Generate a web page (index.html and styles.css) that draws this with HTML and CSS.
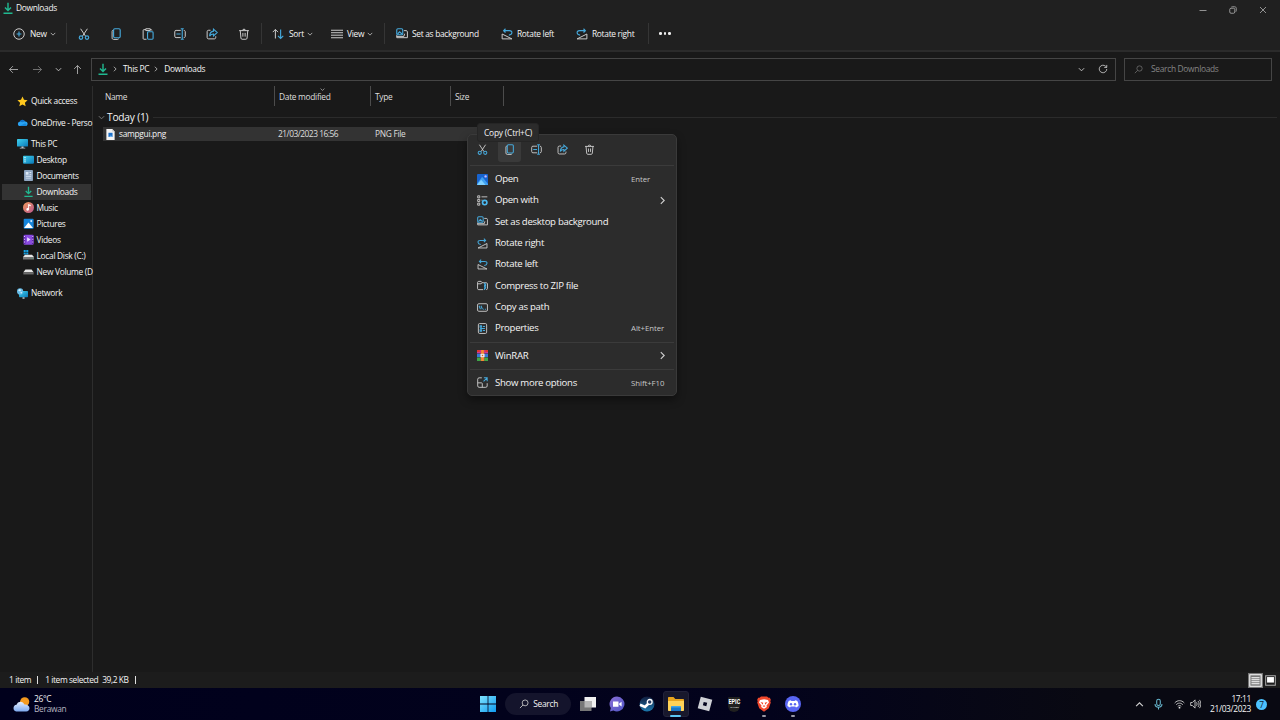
FILE: index.html
```html
<!DOCTYPE html>
<html lang="en">
<head>
    <meta charset="UTF-8">
    <meta name="viewport" content="width=device-width, initial-scale=1.0">
    <title>Downloads</title>
    <link rel="stylesheet" href="styles.css">
</head>
<body>
    <!-- Icon sprite -->
    <svg class="sprite" width="0" height="0">
        <defs>
            <linearGradient id="gScreen" x1="0" y1="0" x2="1" y2="1"><stop offset="0" stop-color="#3fd2ee"/><stop offset="1" stop-color="#0a78b8"/></linearGradient>
            <linearGradient id="gMusic" x1="0" y1="0" x2="1" y2="1"><stop offset="0" stop-color="#f09a5c"/><stop offset="1" stop-color="#b9568e"/></linearGradient>
            <linearGradient id="gWin" x1="0" y1="0" x2="1" y2="1"><stop offset="0" stop-color="#7fe3ff"/><stop offset="1" stop-color="#0f9af0"/></linearGradient>
            <linearGradient id="gCloud" x1="0" y1="0" x2="0" y2="1"><stop offset="0" stop-color="#e4efff"/><stop offset="1" stop-color="#7ea9ee"/></linearGradient>
            <linearGradient id="gSteam" x1="0" y1="0" x2="0" y2="1"><stop offset="0" stop-color="#111d3e"/><stop offset="1" stop-color="#1b78ad"/></linearGradient>
            <linearGradient id="gChat" x1="0" y1="0" x2="1" y2="1"><stop offset="0" stop-color="#8a6fd8"/><stop offset="1" stop-color="#4f55c4"/></linearGradient>
        </defs>
        <symbol id="download" viewBox="0 0 16 16"><path class="g" d="M8 1v10M4 7.2l4 4 4-4M2 15h12"/></symbol>
        <symbol id="new" viewBox="0 0 16 16"><circle class="w" cx="8" cy="8" r="7"/><path class="b" d="M8 4.8v6.4M4.8 8h6.4"/></symbol>
        <symbol id="chevron" viewBox="0 0 16 16"><path class="w c" d="M2 5l6 6 6-6"/></symbol>
        <symbol id="chevron-right" viewBox="0 0 16 16"><path class="w c" d="M5 2l6 6-6 6"/></symbol>
        <symbol id="cut" viewBox="0 0 16 16"><path class="w" d="M3.5 1l6.6 10M12.5 1L5.9 11"/><circle class="b" cx="4" cy="12.8" r="2.3"/><circle class="b" cx="12" cy="12.8" r="2.3"/></symbol>
        <symbol id="copy" viewBox="0 0 16 16"><path class="w" d="M4.5 3.2H3.8c-.7 0-1 .5-1 1.2v8.8c0 1.2.8 2 2 2h5.4c.7 0 1.2-.4 1.2-1"/><rect class="b" x="4.8" y="1" width="8.8" height="12" rx="1.6"/></symbol>
        <symbol id="paste" viewBox="0 0 16 16"><path class="w" d="M5 2.2H2.6c-.7 0-1.1.4-1.1 1.1v10.6c0 .7.4 1.1 1.1 1.1H6M11 2.2h1.2c.7 0 1.1.4 1.1 1.1M5 1h6v2.4H5z"/><rect class="b" x="7.4" y="5" width="7.4" height="10" rx="1.2"/></symbol>
        <symbol id="rename" viewBox="0 0 16 16"><path class="w" d="M9 3.2H2.8C1.600 3.200 1 3.900 1 5v6c0 1.100.6 1.800 1.800 1.800H9M13 3.200c1.300 0 2 .7 2 1.800v6c0 1.100-.7 1.800-2 1.800"/><path class="b" d="M9 1h4M9 15h4M11 1v14M3.200 8h5.600"/></symbol>
        <symbol id="share" viewBox="0 0 16 16"><path class="w" d="M6 3H3.500C2.200 3 1.500 3.700 1.500 5v7.500c0 1.300.7 2 2 2H11c1.300 0 2-.7 2-2V11"/><path class="b" d="M10 1.500L15 6l-5 4.500V8C7.500 8 6 8.800 4.800 10.800 5 7 7 4.500 10 4.200z"/></symbol>
        <symbol id="trash" viewBox="0 0 16 16"><path class="w" d="M1.500 3.500h13M6 3.300C6 1 10 1 10 3.300M3 3.500l.9 10c.1.900.7 1.500 1.600 1.500h5c.9 0 1.500-.6 1.600-1.500l.9-10M6.500 6.500v5M9.500 6.500v5"/></symbol>
        <symbol id="sort" viewBox="0 0 16 16"><path class="w" d="M4.500 14V2M1 5.500L4.500 2 8 5.500"/><path class="b" d="M11.500 2v12M8 10.500l3.500 3.500 3.500-3.500"/></symbol>
        <symbol id="view" viewBox="0 0 16 16"><path class="w" d="M0 3h16M0 6.300h16M0 9.600h16M0 13h16"/></symbol>
        <symbol id="background" viewBox="0 0 16 16"><path class="w" d="M10.500 3.500h3c1 0 1.700.6 1.700 1.600v7.800H1V9.500M1 11.200h9.500l1-3.500"/><rect class="b" x="1" y="1" width="8" height="8" rx="1.500"/><path class="b" d="M2 8l2.800-3L8 8"/></symbol>
        <symbol id="rotate-left" viewBox="0 0 16 16"><path class="w" d="M1.500 8v6.500h13L1.500 8z"/><path class="b" d="M6 1L3.500 3.500 6 6M3.700 3.500h7.500c2.300 0 3.500 1.200 3.300 2.800C14.300 8 13 9.300 10.500 9.500"/></symbol>
        <symbol id="rotate-right" viewBox="0 0 16 16"><path class="w" d="M14.500 8v6.500h-13L14.500 8z"/><path class="b" d="M10 1l2.500 2.500L10 6M12.300 3.500H4.800C2.500 3.500 1.300 4.700 1.500 6.300 1.700 8 3 9.300 5.500 9.500"/></symbol>
        <symbol id="arrow-left" viewBox="0 0 16 16"><path class="w" d="M16 8H1M7 2L1 8l6 6"/></symbol>
        <symbol id="arrow-right" viewBox="0 0 16 16"><path class="w" d="M0 8h15M9 2l6 6-6 6"/></symbol>
        <symbol id="arrow-up" viewBox="0 0 16 16"><path class="w" d="M8 16V1M2 7l6-6 6 6"/></symbol>
        <symbol id="refresh" viewBox="0 0 16 16"><path class="w" d="M14 8a6 6 0 1 1-2-4.500l2 1.800M14 1.500v4h-4"/></symbol>
        <symbol id="search" viewBox="0 0 16 16"><circle class="w" cx="9.800" cy="6.200" r="4.700"/><path class="w" d="M6.400 9.600L1.500 14.500"/></symbol>
        <symbol id="minimize" viewBox="0 0 16 16"><path class="w" d="M1 9h14"/></symbol>
        <symbol id="restore" viewBox="0 0 16 16"><rect class="w" x="1.500" y="4.500" width="10" height="10" rx="2.500"/><path class="w" d="M4.500 2.500C5 1.700 5.700 1.500 7 1.500h4c2.400 0 3.500 1.100 3.500 3.500v4c0 1.300-.4 2-1.200 2.500"/></symbol>
        <symbol id="close" viewBox="0 0 16 16"><path class="w" d="M2 2l12 12M14 2L2 14"/></symbol>
        <symbol id="star" viewBox="0 0 16 16"><path fill="#ffc81e" d="M8 .8l2.200 4.800 5.200.6-3.900 3.500 1.100 5.200L8 12.300l-4.600 2.600 1.100-5.200L.6 6.200l5.200-.6z"/></symbol>
        <symbol id="onedrive" viewBox="0 0 16 16"><path fill="#1173c9" d="M3.500 7.500A4.600 4.600 0 0 1 12 6.500l-3 5z"/><path fill="#2aa3f2" d="M3.300 13A3.100 3.100 0 0 1 4 7c1.500-.3 2.500.1 3.500.7L12 6.400a3.400 3.400 0 0 1 1.200 6.600z"/><path fill="#1689dd" d="M3.500 13L12 9l2.500 3.500c-.4.300-.8.500-1.300.5z"/></symbol>
        <symbol id="pc" viewBox="0 0 16 16"><rect x="0" y="1.500" width="16" height="11" rx="1" fill="url(#gScreen)"/><path fill="#b9c4cc" d="M6.500 12.500h3V14H12v1.200H4V14h2.500z"/></symbol>
        <symbol id="desktop" viewBox="0 0 16 16"><rect x="0" y="2.500" width="16" height="11.500" rx="1.200" fill="url(#gScreen)"/><path fill="#e3f7ff" d="M2 4.500h1.800v1.800H2zM2 7.500h1.800v1.800H2zM2 10.500h1.800V12H2z"/></symbol>
        <symbol id="documents" viewBox="0 0 16 16"><rect x="1.500" y="0" width="13" height="16" rx="1.200" fill="#8fa6c2"/><path fill="#dce8f5" d="M4 3h4v4H4zM9.500 3H12v1.300H9.500zM9.500 5.700H12V7H9.500zM4 8.500h8v1.300H4zM4 11.200h8v1.300H4z"/></symbol>
        <symbol id="music" viewBox="0 0 16 16"><circle cx="8" cy="8" r="8" fill="url(#gMusic)"/><path fill="#fff" d="M7.500 3l3.800 1.300v2L8.800 5.500v5.200a2 2 0 1 1-1.300-1.900z"/></symbol>
        <symbol id="pictures" viewBox="0 0 16 16"><rect x="1" y="1" width="14.500" height="14.500" rx="1.500" fill="#1585dc"/><path fill="#fff" d="M1.500 14.500L7 7.500c.6-.6 1.400-.6 2 0l5.500 7z"/><circle cx="12" cy="4.500" r="1.500" fill="#cfeaff"/></symbol>
        <symbol id="videos" viewBox="0 0 16 16"><rect x="1" y="1" width="14.500" height="14.500" rx="1.500" fill="#8a4be0"/><path fill="#5d25a8" d="M1 2h2.500v12.500H1zM13 2h2.500v12.500H13z"/><path fill="#e8d9ff" d="M1.500 3h1.400v1.500H1.500zM1.500 7h1.400v1.500H1.500zM1.500 11h1.400v1.500H1.500zM13.500 3h1.400v1.500h-1.400zM13.500 7h1.400v1.500h-1.400zM13.500 11h1.400v1.500h-1.400zM6 4.800l5 3.200-5 3.200z"/></symbol>
        <symbol id="disk-c" viewBox="0 0 16 16"><path fill="#17a3e6" d="M1 0h3v3H1zM4.700 0h3v3h-3zM1 3.700h3v2.800H1zM4.700 3.700h3v2.800h-3z"/><path fill="#e6e6e6" d="M3 7h10l3 3.200H0z"/><path fill="#777" d="M0 10.200h16v3.600H0z"/><path fill="#35c98a" d="M12.500 11.500H14v1h-1.500z"/></symbol>
        <symbol id="disk" viewBox="0 0 16 16"><path fill="#e6e6e6" d="M3.500 5h9L15.500 9H.5z"/><path fill="#6b6b6b" d="M.5 9h15v3.300H.5z"/></symbol>
        <symbol id="network" viewBox="0 0 16 16"><rect x="3" y="4.500" width="13" height="9" rx="1" fill="url(#gScreen)"/><path fill="#b9c4cc" d="M8 13.500h3v2.200H8z"/><circle cx="4.500" cy="5" r="4.500" fill="#66bce8"/><path fill="#d8f2ff" d="M1.500 3.500l2.500-2 2 1.500-1.500 2zM4.500 6.500l3-1-1 3z"/></symbol>
        <symbol id="png" viewBox="0 0 16 16"><path fill="#f4f4f4" d="M2 0h8.500L14 3.500V16H2z"/><path fill="#c4c4c4" d="M10.500 0L14 3.500h-3.500z"/><path fill="#1d70c9" d="M5 5.500h6V11.500H5z"/><path fill="#70b7f5" d="M6 11.500L8.500 9l2.500 2.500z"/></symbol>
        <symbol id="photos" viewBox="0 0 16 16"><rect x="0" y="0" width="16" height="16" rx="1.500" fill="#1763cf"/><path fill="#3fa0f2" d="M0 14L6.500 5.500c.7-.8 1.500-.8 2.200 0L16 14.500V16H0z"/><path fill="#7fd0ff" d="M0 16l6-7.500 6.500 7.500z"/><circle cx="12.500" cy="3.500" r="1.700" fill="#c9b9ff"/></symbol>
        <symbol id="open-with" viewBox="0 0 16 16"><path class="w" d="M1 1.200h3v3H1zM1 6.500h3v3H1zM1 11.800h3v3H1zM6.500 2.700H15M6.500 7.500H8"/><circle cx="11.200" cy="11" r="3.200" fill="none" stroke="#4cb9f0" stroke-width="2.400"/></symbol>
        <symbol id="zip" viewBox="0 0 16 16"><path class="w" d="M9 14H2.500C1.500 14 .8 13.400.8 12.500v-9C.8 2.600 1.500 2 2.500 2H6l1.500 2h6c1 0 1.700.6 1.700 1.500v7c0 .9-.7 1.500-1.700 1.500M1 5.500h5L7.500 4"/><path class="b" d="M11 4v2h1.500v2H11v2h1.500v2H11v2.500"/></symbol>
        <symbol id="path" viewBox="0 0 16 16"><rect class="w" x=".8" y="2.500" width="14.400" height="11" rx="1.800"/><path class="b" d="M3 5.500L5 10.500M5.800 5.500l2 5M9 10.500h1M11.500 10.500h1.500"/></symbol>
        <symbol id="properties" viewBox="0 0 16 16"><rect class="w" x="2" y=".8" width="12" height="14.400" rx="1.800"/><path class="b" d="M4.500 4h2v2h-2zM4.500 10h2v2h-2zM8.500 5h3.200M8.500 11h3.200M4.500 8h7"/></symbol>
        <symbol id="winrar" viewBox="0 0 16 16"><path fill="#c93a9c" d="M0 0h16v5H0z"/><path fill="#3579d8" d="M0 5.500h16v5H0z"/><path fill="#3fa648" d="M0 11h16v5H0z"/><path fill="#e0352c" d="M0 0h4v3H0zM12 0h4v3h-4zM5.500 0h5v16h-5z"/><path fill="#f58a35" d="M6 0h4v16H6z"/><path fill="#eee" d="M5 5.500h6v5H5z"/><path fill="#c46b23" d="M7 7h2v2H7z"/></symbol>
        <symbol id="more-options" viewBox="0 0 16 16"><path class="w" d="M7 1.200H3c-1.200 0-2 .8-2 2V13c0 1.200.8 2 2 2h9.800c1.200 0 2-.8 2-2V9M1 8.500h5.500c.8 0 1.200.4 1.200 1.200V15"/><path class="b" d="M10 1.200h4.800V6M14.500 1.500L9.500 6.500"/></symbol>
        <symbol id="weather" viewBox="0 0 16 16"><circle cx="11" cy="5.500" r="4.300" fill="#f39a1f"/><path fill="url(#gCloud)" d="M3 14.500a3.200 3.200 0 0 1 .3-6.300A4 4 0 0 1 10.800 8c3-.3 4.700 1.500 4.700 3.500 0 1.800-1.200 3-3 3z"/></symbol>
        <symbol id="windows" viewBox="0 0 16 16"><path fill="url(#gWin)" d="M0 0h7.600v7.600H0zM8.400 0H16v7.600H8.400zM0 8.400h7.600V16H0zM8.400 8.400H16V16H8.400z"/></symbol>
        <symbol id="taskview" viewBox="0 0 16 16"><path fill="#f0f0f0" d="M4.500 1H16v10.500H4.500z"/><path fill="#777" d="M0 5h11.500v10H0z"/><path fill="#b5b5b5" d="M4.500 5h7v6.500h-7z"/></symbol>
        <symbol id="chat" viewBox="0 0 16 16"><path fill="url(#gChat)" d="M8 .5a7.500 7.500 0 1 1-3.600 14.100L1 15.500l.8-3.400A7.500 7.500 0 0 1 8 .5z"/><path fill="#fff" d="M4 5.500h5.500v5.200H4zM10.200 7.500l2.400-1.700v4.600l-2.400-1.700z"/></symbol>
        <symbol id="steam" viewBox="0 0 16 16"><circle cx="8" cy="8" r="7.500" fill="url(#gSteam)"/><path stroke="#fff" stroke-width="2.600" fill="none" d="M1 8.800l5 2.200 4-4"/><circle cx="10.700" cy="5.900" r="2.400" fill="#223a63" stroke="#fff" stroke-width="1.300"/></symbol>
        <symbol id="explorer" viewBox="0 0 16 16"><path fill="#e8a51e" d="M0 2c0-.6.400-1 1-1h4.500l1.800 2H15c.6 0 1 .4 1 1v4H0z"/><path fill="#ffd257" d="M0 5h16v9c0 .6-.4 1-1 1H1c-.6 0-1-.4-1-1z"/><path fill="#1878c8" d="M3 15v-3.500C3 10.500 3.800 10 4.500 10h7c.7 0 1.500.5 1.500 1.500V15z"/><path fill="#3fa6e8" d="M4.500 10h7c.7 0 1.500.5 1.500 1.500H3c0-1 .8-1.500 1.500-1.500z"/></symbol>
        <symbol id="roblox" viewBox="0 0 16 16"><path fill="#cfd1d6" fill-rule="evenodd" d="M3.800.7l11.500 3.100-3.100 11.500L.7 12.200zM6.700 5.900L5.900 9.300l3.400.9.900-3.400z"/></symbol>
        <symbol id="brave" viewBox="0 0 16 16"><path fill="#f2482c" d="M5 .5h6l1.500 1.300h1.300l1 2-.5 1.700.5 1-2 5.800L8 15.800l-4.800-3.500-2-5.800.5-1-.5-1.700 1-2h1.300z"/><path fill="#fff" d="M4 4l4-.7 4 .7 1 2.500-2.500 3 .3 1.500L8 12.800 5.200 11l.3-1.500L3 6.500z"/><path fill="#f2482c" d="M4.500 6l2.800.7-.6 2zM11.500 6l-2.800.7.600 2zM6.500 10L8 9.300l1.500.7L8 11z"/></symbol>
        <symbol id="discord" viewBox="0 0 16 16"><circle cx="8" cy="8" r="8" fill="#5865f2"/><path fill="#fff" d="M5.500 4.300l1 .6h3l1-.6 1.800.8c.9 1.500 1.300 3.200 1.200 5-.7.700-1.500 1-2.500 1.300l-.7-1H5.700l-.7 1c-1-.3-1.800-.6-2.500-1.300-.1-1.800.3-3.500 1.200-5z"/><circle cx="6" cy="8.200" r="1.200" fill="#5865f2"/><circle cx="10" cy="8.200" r="1.200" fill="#5865f2"/></symbol>
        <symbol id="mic" viewBox="0 0 16 16"><path class="m" d="M8 1.200c1.700 0 2.600 1 2.600 2.500v4c0 1.600-.9 2.600-2.600 2.600s-2.600-1-2.600-2.600v-4C5.400 2.200 6.300 1.200 8 1.200zM3 8c0 3 2 4.700 5 4.700S13 11 13 8M8 12.700V16"/></symbol>
        <symbol id="wifi" viewBox="0 0 16 16"><path class="w" d="M1 6.500c4-4.500 10-4.500 14 0M3.200 9c3-3 6.600-3 9.600 0M5.500 11.400c1.500-1.500 3.500-1.500 5 0"/><circle cx="8" cy="13.300" r="1.300" fill="#eee"/></symbol>
        <symbol id="volume" viewBox="0 0 16 16"><path class="w" d="M1 5.800v4.400h2.500L7.300 14V2L3.500 5.800zM9.500 5.500c1 1.500 1 3.500 0 5M11.700 3.700c2 2.500 2 6 0 8.600M13.800 2c2.800 3.500 2.800 8.500 0 12"/></symbol>
        <symbol id="list-view" viewBox="0 0 16 16"><path fill="none" stroke="#fff" stroke-width="1.300" d="M1 1h14v14H1zM3 4.500h10M3 7h10M3 9.500h10M3 12h10"/></symbol>
        <symbol id="thumb-view" viewBox="0 0 16 16"><path fill="none" stroke="#aaa" stroke-width="1.500" d="M1 1h14v14H1z"/><path fill="#fff" d="M3 3h10v8H3z"/></symbol>
    </svg>

    <div class="window">
        <header class="chrome">
            <div class="titlebar">
                <svg class="icon"><use href="#download"/></svg>
                <span class="title">Downloads</span>
                <div class="window-controls">
                    <svg><use href="#minimize"/></svg>
                    <svg><use href="#restore"/></svg>
                    <svg><use href="#close"/></svg>
                </div>
            </div>
            <div class="commands">
                <div class="cmd cmd-new"><svg class="icon"><use href="#new"/></svg><span>New</span><svg class="caret"><use href="#chevron"/></svg></div>
                <div class="sep"></div>
                <div class="cmd-icons">
                    <svg><use href="#cut"/></svg>
                    <svg><use href="#copy"/></svg>
                    <svg><use href="#paste"/></svg>
                    <svg><use href="#rename"/></svg>
                    <svg><use href="#share"/></svg>
                    <svg><use href="#trash"/></svg>
                </div>
                <div class="sep"></div>
                <div class="cmd cmd-sort"><svg class="icon"><use href="#sort"/></svg><span>Sort</span><svg class="caret"><use href="#chevron"/></svg></div>
                <div class="cmd cmd-view"><svg class="icon"><use href="#view"/></svg><span>View</span><svg class="caret"><use href="#chevron"/></svg></div>
                <div class="sep"></div>
                <div class="cmd cmd-background"><svg class="icon"><use href="#background"/></svg><span>Set as background</span></div>
                <div class="cmd cmd-left"><svg class="icon"><use href="#rotate-left"/></svg><span>Rotate left</span></div>
                <div class="cmd cmd-right"><svg class="icon"><use href="#rotate-right"/></svg><span>Rotate right</span></div>
                <div class="sep"></div>
                <div class="dots"><i></i><i></i><i></i></div>
            </div>
        </header>

        <div class="nav">
            <div class="nav-buttons">
                <svg><use href="#arrow-left"/></svg>
                <svg class="dim"><use href="#arrow-right"/></svg>
                <svg class="small"><use href="#chevron"/></svg>
                <svg><use href="#arrow-up"/></svg>
            </div>
            <div class="address">
                <svg class="folder"><use href="#download"/></svg>
                <svg class="crumb"><use href="#chevron-right"/></svg>
                <span class="pc">This PC</span>
                <svg class="crumb"><use href="#chevron-right"/></svg>
                <span>Downloads</span>
                <svg class="history"><use href="#chevron"/></svg>
                <svg class="reload"><use href="#refresh"/></svg>
            </div>
            <div class="search"><svg><use href="#search"/></svg><span>Search Downloads</span></div>
        </div>

        <div class="content">
            <nav class="sidebar">
                <div class="node quick"><svg><use href="#star"/></svg><span>Quick access</span></div>
                <div class="node onedrive"><svg><use href="#onedrive"/></svg><span>OneDrive - Perso</span></div>
                <div class="node this-pc"><svg><use href="#pc"/></svg><span>This PC</span></div>
                <div class="node child"><svg><use href="#desktop"/></svg><span>Desktop</span></div>
                <div class="node child"><svg><use href="#documents"/></svg><span>Documents</span></div>
                <div class="node child active"><svg><use href="#download"/></svg><span>Downloads</span></div>
                <div class="node child"><svg><use href="#music"/></svg><span>Music</span></div>
                <div class="node child"><svg><use href="#pictures"/></svg><span>Pictures</span></div>
                <div class="node child"><svg><use href="#videos"/></svg><span>Videos</span></div>
                <div class="node child"><svg><use href="#disk-c"/></svg><span>Local Disk (C:)</span></div>
                <div class="node child"><svg><use href="#disk"/></svg><span>New Volume (D</span></div>
                <div class="node network"><svg><use href="#network"/></svg><span>Network</span></div>
            </nav>
            <main class="files">
                <div class="columns">
                    <div class="col col-name">Name</div>
                    <div class="col col-date">Date modified<svg><use href="#chevron"/></svg></div>
                    <div class="col col-type">Type</div>
                    <div class="col col-size">Size</div>
                </div>
                <div class="group"><svg><use href="#chevron"/></svg><span>Today (1)</span><hr></div>
                <div class="file">
                    <div class="file-name"><svg><use href="#png"/></svg><span>sampgui.png</span></div>
                    <div class="file-date">21/03/2023 16:56</div>
                    <div class="file-type">PNG File</div>
                </div>
            </main>
        </div>

        <footer class="status">
            <span class="count">1 item</span><i></i><span class="selected">1 item selected</span><span class="size">39,2 KB</span><i></i>
            <div class="views"><svg class="on"><use href="#list-view"/></svg><svg><use href="#thumb-view"/></svg></div>
        </footer>
    </div>

    <div class="menu">
        <div class="menu-icons">
            <div><svg><use href="#cut"/></svg></div>
            <div class="hover"><svg><use href="#copy"/></svg></div>
            <div><svg><use href="#rename"/></svg></div>
            <div><svg><use href="#share"/></svg></div>
            <div><svg><use href="#trash"/></svg></div>
        </div>
        <div class="menu-group">
            <div class="menu-item"><svg><use href="#photos"/></svg><span>Open</span><kbd>Enter</kbd></div>
            <div class="menu-item"><svg><use href="#open-with"/></svg><span>Open with</span><svg class="sub"><use href="#chevron-right"/></svg></div>
            <div class="menu-item"><svg><use href="#background"/></svg><span>Set as desktop background</span></div>
            <div class="menu-item"><svg><use href="#rotate-right"/></svg><span>Rotate right</span></div>
            <div class="menu-item"><svg><use href="#rotate-left"/></svg><span>Rotate left</span></div>
            <div class="menu-item"><svg><use href="#zip"/></svg><span>Compress to ZIP file</span></div>
            <div class="menu-item"><svg><use href="#path"/></svg><span>Copy as path</span></div>
            <div class="menu-item"><svg><use href="#properties"/></svg><span>Properties</span><kbd>Alt+Enter</kbd></div>
        </div>
        <div class="menu-group">
            <div class="menu-item"><svg><use href="#winrar"/></svg><span>WinRAR</span><svg class="sub"><use href="#chevron-right"/></svg></div>
        </div>
        <div class="menu-group">
            <div class="menu-item"><svg><use href="#more-options"/></svg><span>Show more options</span><kbd>Shift+F10</kbd></div>
        </div>
    </div>
    <div class="tooltip">Copy (Ctrl+C)</div>

    <div class="taskbar">
        <div class="weather"><svg><use href="#weather"/></svg><div><p>26°C</p><p class="muted">Berawan</p></div></div>
        <div class="apps">
            <div class="app"><svg><use href="#windows"/></svg></div>
            <div class="task-search"><svg><use href="#search"/></svg><span>Search</span></div>
            <div class="app"><svg><use href="#taskview"/></svg></div>
            <div class="app"><svg><use href="#chat"/></svg></div>
            <div class="app"><svg><use href="#steam"/></svg></div>
            <div class="app current"><svg><use href="#explorer"/></svg></div>
            <div class="app"><svg><use href="#roblox"/></svg></div>
            <div class="app"><div class="epic"><b>EPIC</b><small>GAMES</small></div></div>
            <div class="app running"><svg><use href="#brave"/></svg></div>
            <div class="app running"><svg><use href="#discord"/></svg></div>
        </div>
        <div class="tray">
            <svg class="up"><use href="#chevron"/></svg>
            <svg class="mic"><use href="#mic"/></svg>
            <svg class="wifi"><use href="#wifi"/></svg>
            <svg class="volume"><use href="#volume"/></svg>
            <div class="clock"><p>17:11</p><p>21/03/2023</p></div>
            <div class="badge">7</div>
        </div>
    </div>
</body>
</html>
```
FILE: styles.css
```css
* {
    box-sizing: border-box;
    margin: 0;
    padding: 0;
}

body {
    width: 1280px;
    height: 720px;
    overflow: hidden;
    background-color: #191919;
    color: #f5f5f5;
    font-family: 'Open Sans', 'Noto Sans', sans-serif;
    font-size: 8.4px;
    letter-spacing: -0.3px;
    line-height: 12px;
    white-space: nowrap;
}

svg {
    display: block;
    flex: none;
    width: 12px;
    height: 12px;
    overflow: visible;
}

.sprite {
    position: absolute;
    width: 0;
    height: 0;
}

/* icon strokes */
.w, .b, .g, .m {
    fill: none;
    stroke: #d0d0d0;
    stroke-width: 1.3;
}

.c {
    stroke-width: 2;
}

.b {
    stroke: #45a9dc;
    stroke-width: 1.5;
}

.g {
    stroke: #20b890;
    stroke-width: 1.9;
}

.m {
    stroke: #68b9d0;
    stroke-width: 1.5;
}

.window {
    display: flex;
    flex-direction: column;
    height: 688px;
}

/* title and command bar */
.chrome {
    height: 52px;
    background-color: #202020;
    border-bottom: 2px solid #2b2b2b;
}

.titlebar {
    display: flex;
    align-items: center;
    height: 16px;
    padding-left: 2px;
}

.titlebar .title {
    margin-left: 2px;
}

.window-controls {
    display: flex;
    gap: 22px;
    margin: 3px 13px 0 auto;
}

.window-controls svg {
    width: 8px;
    height: 8px;
}

.window-controls .w {
    stroke: #f0f0f0;
    stroke-width: 1.8;
}

.commands {
    display: flex;
    align-items: center;
    height: 35px;
    font-weight: 500;
}

.sep {
    width: 1px;
    height: 21px;
    background-color: #353535;
}

.cmd {
    display: flex;
    align-items: center;
}

.cmd span {
    margin-left: 5px;
}

.caret {
    width: 6px;
    height: 6px;
    margin-left: auto;
}

.cmd-new {
    width: 66px;
    padding: 0 10px 0 13px;
}

.cmd-sort {
    width: 60px;
    padding: 0 9px 0 10px;
}

.cmd-view {
    width: 62px;
    padding: 0 11px 0 9px;
}

.cmd-view span {
    margin-left: 4px;
}

.cmd-background {
    width: 107px;
    padding-left: 11px;
}

.cmd-background span {
    margin-left: 4px;
}

.cmd-left {
    width: 75px;
    padding-left: 9px;
}

.cmd-left span,
.cmd-right span {
    margin-left: 4px;
}

.cmd-right {
    width: 81px;
    padding-left: 9px;
}

.cmd-icons {
    display: flex;
    gap: 20px;
    width: 194px;
    padding-left: 11px;
}

.dots {
    display: flex;
    gap: 2px;
    margin-left: 10px;
}

.dots i {
    width: 2.5px;
    height: 2.5px;
    border-radius: 50%;
    background-color: #eee;
}

/* address row */
.nav {
    display: flex;
    align-items: center;
    height: 34px;
}

.nav-buttons {
    display: flex;
    align-items: center;
    gap: 13px;
    width: 91px;
    padding-left: 9px;
}

.nav-buttons svg {
    width: 9px;
    height: 9px;
}

.nav-buttons .small {
    width: 7px;
    height: 7px;
}

.nav-buttons svg:nth-child(2) {
    margin-left: 2px;
}

.nav-buttons svg:nth-child(4) {
    margin-left: -2px;
}

.nav-buttons .w,
.address .w {
    stroke: #f5f5f5;
    stroke-width: 2.2;
}

.dim {
    opacity: 0.65;
}

.address {
    display: flex;
    align-items: center;
    width: 1025px;
    height: 23px;
    padding: 0 7px 0 5px;
    border: 1px solid #454545;
}

.address .crumb {
    width: 6px;
    height: 6px;
    margin: 0 5px 0 3px;
}

.address .crumb .w {
    stroke-width: 3;
}

.address .pc {
    margin-right: 1px;
}

.address .history {
    width: 7px;
    height: 7px;
    margin-left: auto;
}

.address .reload {
    width: 10px;
    height: 10px;
    margin-left: 13px;
}

.search {
    display: flex;
    align-items: center;
    width: 148px;
    height: 23px;
    margin-left: 8px;
    padding-left: 9px;
    border: 1px solid #454545;
    color: #858585;
}

.search svg {
    width: 9px;
    height: 9px;
    margin-right: 8px;
    opacity: 0.5;
}

/* panes */
.content {
    display: flex;
    height: 586px;
}

.sidebar {
    width: 93px;
    padding: 7.4px 1px 0 2px;
    border-right: 1px solid #2d2d2d;
}

.node {
    display: flex;
    align-items: center;
    height: 16px;
    padding-left: 15px;
}

.node svg {
    width: 11px;
    height: 11px;
    margin-right: 3px;
}

.node.child {
    padding-left: 20.5px;
}

.node.onedrive {
    margin: 5.3px 0;
}

.node.network {
    margin-top: 5.3px;
}

.node.active {
    background-color: #333;
}

.files {
    flex: 1;
    padding-left: 5px;
}

.columns {
    display: flex;
    height: 21px;
    color: #dedede;
}

.col {
    height: 20px;
    padding: 4.500px 0 0 4px;
    border-right: 1px solid #4c4c4c;
}

.col-name {
    width: 177px;
    padding-left: 7px;
}

.col-date {
    position: relative;
    width: 96px;
}

.col-date svg {
    position: absolute;
    top: 1px;
    left: 45px;
    width: 5px;
    height: 5px;
}

.col-type {
    width: 80px;
}

.col-size {
    width: 53px;
}

.group {
    display: flex;
    align-items: center;
    height: 20px;
    font-size: 10.2px;
    letter-spacing: -0.2px;
}

.group svg {
    width: 7px;
    height: 7px;
    margin-right: 2px;
    opacity: 0.6;
}

.group hr {
    flex: 1;
    height: 1px;
    margin: 0 3px 0 5px;
    border: none;
    background-color: #2b2b2b;
}

.file {
    display: flex;
    align-items: center;
    width: 405px;
    height: 14px;
    margin: 0 0 0 5px;
    background-color: #333;
    color: #dedede;
}

.file-name {
    display: flex;
    align-items: center;
    width: 175px;
    padding-left: 2px;
    color: #f5f5f5;
}

.file-name svg {
    width: 11px;
    height: 11px;
    margin-right: 3px;
}

.file-date {
    width: 97px;
    letter-spacing: -0.5px;
}

.status {
    display: flex;
    align-items: center;
    height: 16px;
    padding: 0 4px 0 9px;
    background-color: #1c1c1c;
    letter-spacing: -0.4px;
}

.status i {
    width: 1px;
    height: 8px;
    margin: 0 7px 0 6px;
    background-color: #e0e0e0;
}

.status .size {
    margin-left: 4px;
}

.views {
    display: flex;
    align-items: center;
    gap: 2px;
    margin-left: auto;
}

.views svg {
    width: 11px;
    height: 11px;
}

.views .on {
    width: 15px;
    height: 15px;
    padding: 1px;
    background-color: #777;
}

/* context menu */
.menu {
    position: absolute;
    top: 134px;
    left: 467px;
    width: 210px;
    height: 262px;
    padding: 0 3px;
    border: 1px solid #3a3a3a;
    border-radius: 5px;
    background-color: #2c2c2c;
    box-shadow: 0 4px 9px rgba(0, 0, 0, 0.4);
    font-size: 9.6px;
}

.menu-icons {
    display: flex;
    gap: 3px;
    padding: 2.5px 0 3.5px 0;
}

.menu-icons div {
    display: flex;
    align-items: center;
    justify-content: center;
    width: 23.7px;
    height: 24px;
    border-radius: 3px;
}

.menu-icons svg {
    width: 11px;
    height: 11px;
}

.menu-icons .hover {
    background-color: #3a3a3a;
}

.menu-group {
    margin: 0 -1px;
    padding: 2.4px 1px 2.5px;
    border-top: 1px solid #3b3b3b;
}

.menu-item {
    display: flex;
    align-items: center;
    height: 21.35px;
    padding: 0 6px 0 6px;
}

.menu-item svg {
    width: 11px;
    height: 11px;
    margin-right: 7px;
}

.menu-item .sub {
    width: 9px;
    height: 9px;
    margin: 0 0 0 auto;
}

.menu-item kbd {
    width: 36px;
    margin-left: auto;
    color: #c8c8c8;
    font-family: inherit;
    font-size: 7.8px;
    letter-spacing: -0.05px;
}

.tooltip {
    position: absolute;
    top: 123px;
    left: 477px;
    width: 62px;
    height: 19px;
    border: 1px solid #252525;
    border-radius: 3px;
    background-color: #2b2b2b;
    line-height: 17px;
    text-align: center;
    letter-spacing: -0.2px;
}

/* taskbar */
.taskbar {
    display: grid;
    grid-template-columns: 473px 1fr auto;
    height: 32px;
    background: linear-gradient(90deg, #00001c, #03031c 60%, #090912 85%);
}

.weather {
    display: flex;
    align-items: center;
    gap: 4px;
    padding-left: 13px;
    line-height: 10.5px;
}

.weather svg {
    width: 17px;
    height: 17px;
}

.muted {
    color: #b5b5c0;
}

.apps {
    display: flex;
    align-items: center;
}

.app {
    position: relative;
    display: flex;
    align-items: center;
    justify-content: center;
    width: 29.3px;
    height: 32px;
}

.app svg {
    width: 16px;
    height: 16px;
}

.app.current::before {
    content: "";
    position: absolute;
    inset: 3px 1.5px;
    border: 1px solid #22223a;
    border-radius: 3px;
    background-color: #18182c;
}

.app.current svg {
    position: relative;
}

.app.current::after,
.app.running::after {
    content: "";
    position: absolute;
    bottom: 3.5px;
    width: 4px;
    height: 2px;
    border-radius: 1px;
    background-color: #9a9aa6;
}

.app.current::after {
    width: 11px;
    background-color: #5cc8f5;
}

.task-search {
    display: flex;
    align-items: center;
    width: 66px;
    height: 22px;
    margin: 0 2px 0 3px;
    padding-left: 14px;
    border-radius: 11px;
    background-color: #14142c;
}

.task-search svg {
    width: 10px;
    height: 10px;
    margin-right: 4px;
}

.task-search .w {
    stroke: #fff;
    stroke-width: 2;
}

.epic {
    width: 12px;
    height: 15px;
    border-radius: 1px 1px 6px 6px;
    background-color: #20201f;
    text-align: center;
    letter-spacing: 0;
    color: #fff;
}

.epic b {
    display: block;
    font-family: 'Roboto', sans-serif;
    font-size: 5.5px;
    line-height: 9px;
    transform: scaleY(1.4);
}

.epic small {
    display: block;
    font-size: 2.5px;
    line-height: 3px;
}

.tray {
    display: flex;
    align-items: center;
    padding-right: 13px;
}

.tray .w {
    stroke: #eee;
    stroke-width: 1.6;
}

.tray .up {
    width: 9px;
    height: 9px;
    transform: rotate(180deg);
}

.tray .mic {
    width: 11px;
    margin-left: 9px;
}

.tray .wifi {
    width: 11px;
    margin-left: 10px;
}

.tray .volume {
    width: 11px;
    margin-left: 5px;
}

.clock {
    width: 42px;
    margin-left: 8px;
    line-height: 10px;
    text-align: right;
    letter-spacing: -0.35px;
}

.badge {
    width: 11px;
    height: 11px;
    margin-left: 5px;
    border-radius: 50%;
    background-color: #4cc2ff;
    color: #10202c;
    line-height: 11px;
    text-align: center;
}
```
